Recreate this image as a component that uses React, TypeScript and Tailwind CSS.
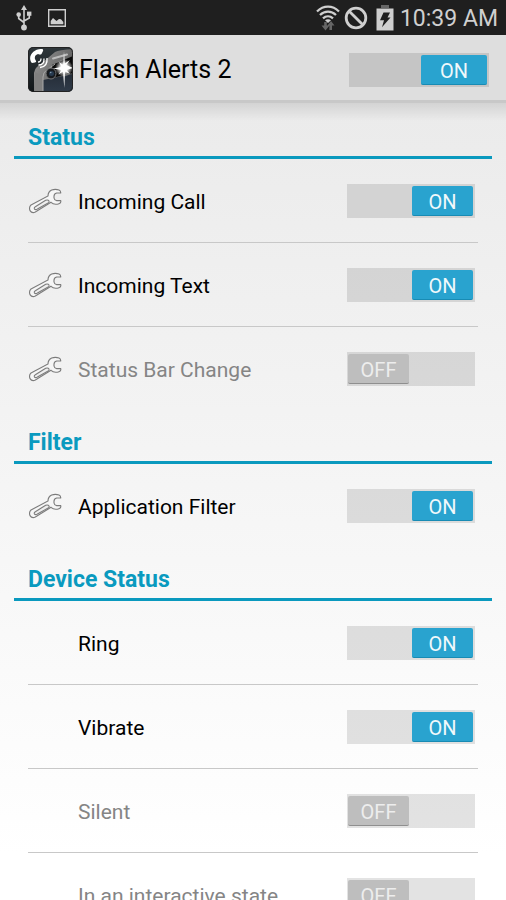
import React, { useState } from 'react';
import clsx from 'clsx';

interface Setting {
  id: string;
  label: string;
  on: boolean;
  configurable?: boolean;
}

interface Section {
  title: string;
  items: Setting[];
}

const SECTIONS: Section[] = [
  {
    title: 'Status',
    items: [
      { id: 'call', label: 'Incoming Call', on: true, configurable: true },
      { id: 'text', label: 'Incoming Text', on: true, configurable: true },
      { id: 'statusbar', label: 'Status Bar Change', on: false, configurable: true },
    ],
  },
  {
    title: 'Filter',
    items: [{ id: 'filter', label: 'Application Filter', on: true, configurable: true }],
  },
  {
    title: 'Device Status',
    items: [
      { id: 'ring', label: 'Ring', on: true },
      { id: 'vibrate', label: 'Vibrate', on: true },
      { id: 'silent', label: 'Silent', on: false },
      { id: 'interactive', label: 'In an interactive state', on: false },
    ],
  },
];

const UsbIcon = () => (
  <svg className="h-[26px] w-4" viewBox="0 0 16 26" fill="none" stroke="#cfcfcf" strokeWidth="1.6">
    <path d="M8 4v17M2.7 10v3.5L8 17.5M13.3 9v4L8 16" />
    <path d="M8 0l3 5H5z" fill="#cfcfcf" stroke="none" />
    <circle cx="2.7" cy="9.6" r="2.3" fill="#cfcfcf" stroke="none" />
    <path d="M11 6.6h4.4v4.2H11z" fill="#cfcfcf" stroke="none" />
    <circle cx="8" cy="22.5" r="2.9" fill="#cfcfcf" stroke="none" />
  </svg>
);

const PictureIcon = () => (
  <svg className="h-[18px] w-[18px]" viewBox="0 0 18 18" fill="none">
    <path d="M.7.7h16.6v16.6H.7z" stroke="#cfcfcf" strokeWidth="1.4" />
    <path d="M2.7 15.3V12L5 9l3.5 3L11 10l2 .3 2.3 2.700v2.300z" fill="#cfcfcf" />
  </svg>
);

const WifiIcon = () => (
  <svg className="h-[26px] w-6" viewBox="0 0 24 26" fill="none">
    <g stroke="#cfcfcf" strokeWidth="2.3">
      <path d="M1 6.5C7.5.1 16.5.1 23 6.5" />
      <path d="M4 10c4.7-4.5 11.3-4.5 16 0" />
      <path d="M7 13.3c3-2.7 7-2.7 10 0" />
    </g>
    <path d="M9 15.2c1.8-1.4 4.2-1.4 6 0l-3 2.8z" fill="#cfcfcf" />
    <path d="M9.5 17v4M14.700 25v-5" stroke="#666" strokeWidth="2.6" />
    <path d="M5.500 20.500h8l-4 5zM11.500 20.500h7l-3.500-4.500z" fill="#666" />
  </svg>
);

const BlockIcon = () => (
  <svg className="h-6 w-6" viewBox="0 0 24 24" fill="none" stroke="#cfcfcf" strokeWidth="2.8">
    <circle cx="12" cy="12" r="9.8" />
    <path d="M5.2 5.2l13.6 13.6" />
  </svg>
);

const BatteryIcon = () => (
  <svg className="h-[26px] w-[18px]" viewBox="0 0 18 26">
    <path d="M5 0h8v3H5z" fill="#666" />
    <path d="M.5 3.5h17v22H.5z" fill="#cfcfcf" />
    <path d="M7.5 7.500H14l-2.500 5h3L6 22.300l2-7H4z" fill="#1f1f1f" />
  </svg>
);

const WrenchIcon = () => (
  <svg className="h-[26px] w-[34px]" viewBox="0 0 102 78" fill="#f6f6f6" stroke="#7c7c7c" strokeWidth="3.4">
    <path d="M9 51L60 24Q60 11 71 6Q82 2 93 6Q99 9 98 15H86Q78 17 78 25V30Q79 37 86 38H98Q100 45 93 47Q78 52 69 43L22 72Q12 77 6 68Q2 57 9 51Z" />
    <path d="M22 56L53 37Q60 34 63 39Q65 43 59 46L27 64Q21 66 19 62Q18 58 22 56Z" fill="#eee" />
  </svg>
);

const AppIcon = () => (
  <svg className="h-[45px] w-[45px] shrink-0" viewBox="0 0 45 45">
    <defs>
      <clipPath id="tile">
        <rect width="45" height="45" rx="5" />
      </clipPath>
      <linearGradient id="sky" x2="0" y2="1">
        <stop stopColor="#30383c" />
        <stop offset="1" stopColor="#101518" />
      </linearGradient>
      <linearGradient id="metal" x2="1" y2="0.6">
        <stop stopColor="#9a9a9a" />
        <stop offset="1" stopColor="#555" />
      </linearGradient>
      <linearGradient id="glass" x2="0" y2="1">
        <stop stopColor="#252d38" />
        <stop offset="1" stopColor="#303b49" />
      </linearGradient>
      <radialGradient id="glow">
        <stop offset=".35" stopColor="#fff" />
        <stop offset=".6" stopColor="#fff" stopOpacity=".6" />
        <stop offset="1" stopColor="#fff" stopOpacity="0" />
      </radialGradient>
    </defs>
    <g clipPath="url(#tile)">
      <path d="M0 0h45v45H0z" fill="url(#sky)" />
      <path d="M6 45V26Q7 20 14 16L27 5Q31 3 45 2V45Z" fill="url(#metal)" />
      <path d="M7 25l8 4v16H7z" fill="#808080" />
      <path d="M15 33L45 27V45H15Z" fill="url(#glass)" />
      <path d="M24 18L45 9V26L24 31Z" fill="#090909" />
      <path d="M25 11.5L39 7.5" stroke="#bbb" strokeWidth="2" strokeLinecap="round" />
      <path d="M15 45V30Q15 25 19 23L27 17" stroke="#a8a8a8" strokeWidth="1" fill="none" />
      <ellipse cx="23" cy="26.5" rx="5" ry="5.5" fill="#171a1e" stroke="#777" />
      <circle cx="23.5" cy="26.5" r="2.5" fill="#26394e" />
      <circle cx="22.7" cy="25.5" r=".8" fill="#8197aa" />
      <circle cx="36" cy="21" r="9" fill="url(#glow)" />
      <path
        d="M36 4l.8 12.500 5-3.500-3.500 5L45 21l-6.500 2 3.500 4-5-2.500L36.300 41 35 24.500l-4.500 3 3-4.500-8.500-1.500 8.500-1.500-2.500-5 4.200 3z"
        fill="#fff"
      />
      <path d="M3 15C-.5 8 7 1 14 2q1.500 0 1 2l-1.500 3q-1 1-3.500 0C7 8 6.500 10 7 12l1 2q.5 1-1 1.500l-3 .5z" fill="#fff" />
      <g fill="none" stroke="#fff" strokeWidth="1.3">
        <path d="M10 15q3 0 3-3.500" />
        <path d="M10.500 18q6 0 5.500-6.500" />
        <path d="M12 20.500q8-1 7-9.500" />
      </g>
      <rect x=".5" y=".5" width="44" height="44" rx="5" fill="none" stroke="#222" />
    </g>
  </svg>
);

interface ToggleProps {
  label: string;
  on: boolean;
  onChange: () => void;
  large?: boolean;
}

const Toggle: React.FC<ToggleProps> = ({ label, on, onChange, large }) => (
  <button
    type="button"
    role="switch"
    aria-checked={on}
    aria-label={label}
    onClick={onChange}
    className={clsx(
      'flex h-[34px] shrink-0 bg-black/11 p-[2px] pl-px',
      large ? 'w-[140px]' : 'w-32',
      on ? 'justify-end' : 'justify-start'
    )}
  >
    <span
      className={clsx(
        'flex h-[30px] items-center justify-center rounded-xs border-b pt-[3px] text-xl',
        large ? 'w-[66px]' : 'w-[61px]',
        on ? 'border-[#188bb4] bg-[#29a3cf] text-[#f0f8fb]' : 'border-[#8f8f8f] bg-[#bebebe] text-[#ededed]'
      )}
    >
      {on ? 'ON' : 'OFF'}
    </span>
  </button>
);

const App: React.FC = () => {
  const [enabled, setEnabled] = useState(true);
  const [sections, setSections] = useState(SECTIONS);

  const toggleItem = (id: string) => {
    setSections((prev) =>
      prev.map((section) => ({
        ...section,
        items: section.items.map((item) => (item.id === id ? { ...item, on: !item.on } : item)),
      }))
    );
  };

  return (
    <div className="flex h-screen flex-col overflow-hidden bg-linear-to-b from-[#e8e8e8] to-white to-95% font-['Roboto',sans-serif] text-black">
      {/* Status bar */}
      <div className="flex h-[35px] shrink-0 items-center justify-between bg-[#1f1f1f] pr-2 pl-4 text-[#cfcfcf]">
        <div className="flex items-center gap-4">
          <UsbIcon />
          <PictureIcon />
        </div>
        <div className="flex items-center">
          <div className="mr-[6px] flex items-center gap-1">
            <WifiIcon />
            <BlockIcon />
            <span className="ml-1">
              <BatteryIcon />
            </span>
          </div>
          <span className="pt-[3px] text-[23px]">10:39 AM</span>
        </div>
      </div>

      {/* Action bar */}
      <header className="flex h-[68px] shrink-0 items-center border-b-3 border-[#c8c8c8] bg-[#dedede] pt-1 pr-[17px] pl-7">
        <AppIcon />
        <h1 className="ml-[6px] flex-1 text-[25px]">Flash Alerts 2</h1>
        <Toggle large label="Flash Alerts 2" on={enabled} onChange={() => setEnabled(!enabled)} />
      </header>

      <main className="min-h-0 flex-1 overflow-y-auto bg-linear-to-b from-black/10 to-transparent to-[18px] pt-[3px] [scrollbar-width:none]">
        {sections.map((section) => (
          <section key={section.title} className="px-[14px]">
            <h2 className="flex h-[53px] items-end border-b-3 border-[#0a99be] px-[14px] pb-1 text-[23px] leading-7 font-bold text-[#0a9abf]">
              {section.title}
            </h2>
            <ul className="px-[14px]">
              {section.items.map((item) => (
                <li
                  key={item.id}
                  className="flex h-[84px] items-center border-b border-[#c8c8c8] pr-[3px] last:border-transparent"
                >
                  <div className="w-[50px] shrink-0">{item.configurable && <WrenchIcon />}</div>
                  <span className={clsx('flex-1 pt-1 text-[21px]', !item.on && 'text-[#858585]')}>
                    {item.label}
                  </span>
                  <Toggle label={item.label} on={item.on} onChange={() => toggleItem(item.id)} />
                </li>
              ))}
            </ul>
          </section>
        ))}
      </main>
    </div>
  );
};

export default App;
